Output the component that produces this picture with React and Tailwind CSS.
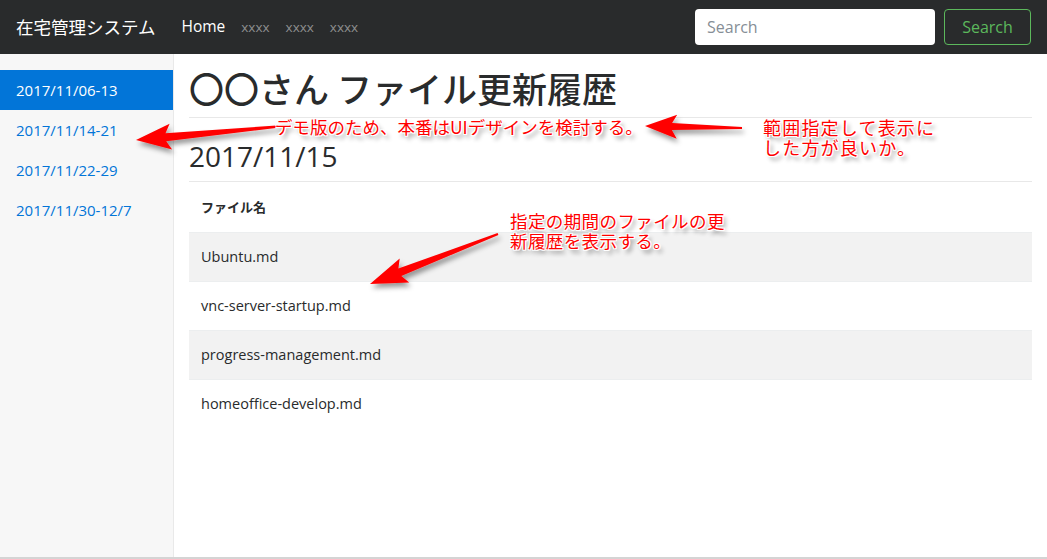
import React from 'react';

// annotation arrow: tapered shaft with a swept-back head
const arrowPoints = (x1, y1, x2, y2, tailW, neckW, headL, headW) => {
  const dx = x2 - x1;
  const dy = y2 - y1;
  const len = Math.hypot(dx, dy);
  const ux = dx / len;
  const uy = dy / len;
  const nx = -uy;
  const ny = ux;
  const neckX = x2 - ux * headL;
  const neckY = y2 - uy * headL;
  const barbX = neckX - ux * 5;
  const barbY = neckY - uy * 5;
  const pts = [
    [x1 + nx * tailW / 2, y1 + ny * tailW / 2],
    [neckX + nx * neckW / 2, neckY + ny * neckW / 2],
    [barbX + nx * headW / 2, barbY + ny * headW / 2],
    [x2, y2],
    [barbX - nx * headW / 2, barbY - ny * headW / 2],
    [neckX - nx * neckW / 2, neckY - ny * neckW / 2],
    [x1 - nx * tailW / 2, y1 - ny * tailW / 2],
  ];
  return pts.map(p => p.map(v => v.toFixed(1)).join(',')).join(' ');
};

const arrows = [
  arrowPoints(284, 126, 136, 140, 2, 8, 30, 26),
  arrowPoints(742, 128, 645, 126, 2, 7, 27, 24),
  arrowPoints(498, 234, 370, 284, 2, 8, 32, 26),
];

const periods = ['2017/11/06-13', '2017/11/14-21', '2017/11/22-29', '2017/11/30-12/7'];
const files = ['Ubuntu.md', 'vnc-server-startup.md', 'progress-management.md', 'homeoffice-develop.md'];

const noteClass =
  "absolute text-[#ff0000] leading-[20px] whitespace-nowrap font-['Noto_Sans_CJK_JP',sans-serif] [text-shadow:-1px_-1px_0_#fff,1px_-1px_0_#fff,-1px_1px_0_#fff,1px_1px_0_#fff,0_1px_0_#fff,1px_0_0_#fff,3px_4px_4px_rgba(0,0,0,0.45)]";

export default function App() {
  return (
    <div className="relative h-[559px] flex flex-col border-b-2 border-[#d4d4d4] bg-white text-[#292b2c] font-['Open_Sans','Noto_Sans_CJK_JP',sans-serif]">
      {/* Navbar */}
      <nav className="h-[54px] shrink-0 bg-[#292b2c] flex items-center pl-4 pr-4">
        <div className="text-white text-[17.5px] mr-[26px] font-['Noto_Sans_CJK_JP',sans-serif]">在宅管理システム</div>
        <div className="flex items-center gap-4 text-[15.5px]">
          <span className="text-white">Home</span>
          <span className="text-[#8e8f8f] text-[13.5px]">xxxx</span>
          <span className="text-[#8e8f8f] text-[13.5px]">xxxx</span>
          <span className="text-[#8e8f8f] text-[13.5px]">xxxx</span>
        </div>
        <div className="ml-auto flex items-center gap-[9px]">
          <div className="w-[240px] h-[36px] bg-white rounded flex items-center px-3 text-[16px] text-[#868e96]">Search</div>
          <div className="w-[87px] h-[36px] rounded border border-[#5cb85c] flex items-center justify-center text-[16px] text-[#5cb85c]">Search</div>
        </div>
      </nav>

      <div className="flex flex-1">
        {/* Sidebar */}
        <aside className="w-[174px] shrink-0 bg-[#f7f7f7] border-r border-[#e9e9e9] pt-[16px]">
          {periods.map((p, i) => (
            <div
              key={p}
              className={
                i === 0
                  ? "h-[40px] flex items-center pl-4 text-[15px] bg-[#0275d8] text-white"
                  : "h-[40px] flex items-center pl-4 text-[15px] text-[#0275d8]"
              }
            >
              {p}
            </div>
          ))}
        </aside>

        {/* Main */}
        <main className="flex-1 pl-[15px] pr-[15px]">
          <h1 className="mt-[12px] h-[52px] text-[35px] leading-[44px] font-medium font-['Noto_Sans_CJK_JP',sans-serif] border-b border-[#e8e8e8]">〇〇さん ファイル更新履歴</h1>
          <h2 className="h-[64px] pt-[20px] text-[28px] leading-[36px] border-b border-[#e8e8e8]">2017/11/15</h2>
          <div className="text-[14.5px]">
            <div className="h-[50px] flex items-center px-3 font-bold font-['Noto_Sans_CJK_JP',sans-serif] text-[13px]">ファイル名</div>
            {files.map((f, i) => (
              <div
                key={f}
                className={
                  i % 2 === 0
                    ? "h-[49px] flex items-center px-3 bg-[#f2f2f2] border-t border-[#eceeef]"
                    : "h-[49px] flex items-center px-3 border-t border-[#eceeef]"
                }
              >
                {f}
              </div>
            ))}
          </div>
        </main>
      </div>

      {/* Annotations */}
      <svg className="absolute left-0 top-0 pointer-events-none" width="1047" height="559">
        <defs>
          <filter id="shadow" x="-20%" y="-50%" width="140%" height="200%">
            <feDropShadow dx="2" dy="4" stdDeviation="2.5" floodColor="#000" floodOpacity="0.4" />
          </filter>
        </defs>
        {arrows.map((pts, i) => (
          <polygon key={i} points={pts} fill="#ff0000" filter="url(#shadow)" />
        ))}
      </svg>
      <div className={noteClass + " left-[275px] top-[117px] text-[17.5px]"}>
        デモ版のため、本番はUIデザインを検討する。
      </div>
      <div className={noteClass + " left-[763px] top-[117px] text-[18px] tracking-[1.2px]"}>
        範囲指定して表示に
        <br />
        した方が良いか。
      </div>
      <div className={noteClass + " left-[510px] top-[211px] text-[17.5px] tracking-[0.4px]"}>
        指定の期間のファイルの更
        <br />
        新履歴を表示する。
      </div>
    </div>
  );
}
